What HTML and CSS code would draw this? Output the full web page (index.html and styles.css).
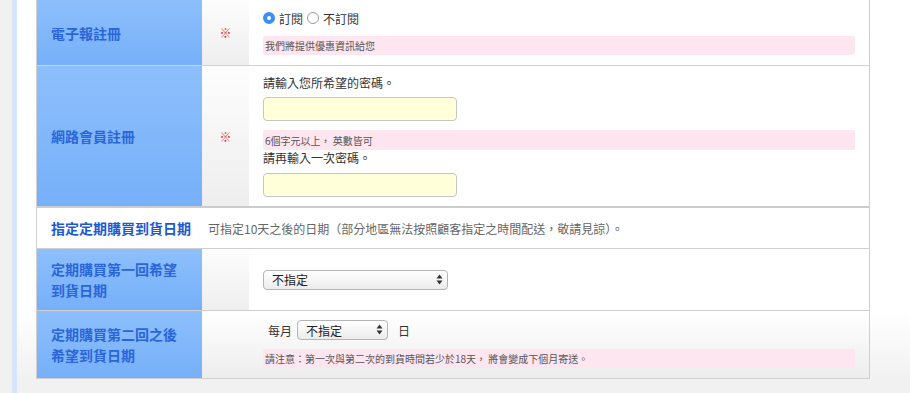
FILE: index.html
```html
<!DOCTYPE html>
<html lang="zh-Hant">
<head>
    <meta charset="UTF-8">
    <meta name="viewport" content="width=device-width, initial-scale=1.0">
    <title>會員註冊</title>
    <link rel="stylesheet" href="styles.css">
</head>
<body>
    <div class="page">
        <div class="form-table">
            <div class="form-row row-mail">
                <div class="label">電子報註冊</div>
                <div class="req">※</div>
                <div class="field">
                    <div class="radios">
                        <label class="radio"><input type="radio" name="mail" checked> 訂閱</label>
                        <label class="radio"><input type="radio" name="mail"> 不訂閱</label>
                    </div>
                    <div class="note note-mail">我們將提供優惠資訊給您</div>
                </div>
            </div>

            <div class="form-row row-member">
                <div class="label label-light">網路會員註冊</div>
                <div class="req">※</div>
                <div class="field">
                    <div class="text-line first">請輸入您所希望的密碼。</div>
                    <input type="password" class="pw">
                    <div class="note note-pw">6個字元以上，&nbsp;英數皆可</div>
                    <div class="text-line">請再輸入一次密碼。</div>
                    <input type="password" class="pw pw2">
                </div>
            </div>

            <div class="form-row row-info">
                <div class="label label-plain">指定定期購買到貨日期</div>
                <div class="info">可指定10天之後的日期（部分地區無法按照顧客指定之時間配送，敬請見諒）。</div>
            </div>

            <div class="form-row row-first">
                <div class="label two-line">定期購買第一回希望<br>到貨日期</div>
                <div class="req"></div>
                <div class="field center">
                    <span class="select-wrap wide">
                        <select><option>不指定</option></select>
                        <span class="arrows"><svg width="7" height="11" viewBox="0 0 7 11"><path d="M3.5 0.5L6.5 4.5H0.5Z" fill="#333"/><path d="M3.5 10.5L6.5 6.5H0.5Z" fill="#333"/></svg></span>
                    </span>
                </div>
            </div>

            <div class="form-row row-second">
                <div class="label two-line">定期購買第二回之後<br>希望到貨日期</div>
                <div class="req"></div>
                <div class="field">
                    <div class="month-line">
                        <span>每月</span>
                        <span class="select-wrap narrow">
                            <select><option>不指定</option></select>
                            <span class="arrows"><svg width="7" height="11" viewBox="0 0 7 11"><path d="M3.5 0.5L6.5 4.5H0.5Z" fill="#333"/><path d="M3.5 10.5L6.5 6.5H0.5Z" fill="#333"/></svg></span>
                        </span>
                        <span>日</span>
                    </div>
                    <div class="note note-second">請注意：第一次與第二次的到貨時間若少於18天，&nbsp;將會變成下個月寄送。</div>
                </div>
            </div>
        </div>
    </div>
</body>
</html>
```

FILE: styles.css
```css
body {
    margin: 0;
    background: #f1f1f1;
    font-family: "Noto Sans CJK TC", "Noto Sans", sans-serif;
    color: #333;
    height: 393px;
    overflow: hidden;
}
.page {
    margin-left: 12px;
    width: 872px;
    height: 400px;
    border-left: 5px solid #d7e6fa;
    border-right: 5px solid #d7e6fa;
    padding: 0 19px;
    box-sizing: content-box;
    background: linear-gradient(to bottom, #fff 0, #fff 78%, #f1f1f1 95%);
}
.form-table {
    width: 834px;
    margin-top: -1px;
    border: 1px solid #cfcfcf;
    box-sizing: border-box;
    background: #fff;
}
.form-row {
    display: grid;
    grid-template-columns: 165px 47px 1fr;
    border-top: 1px solid #cfcfcf;
    box-sizing: border-box;
}
.row-mail {
    height: 65px;
    border-top: none;
}
.row-member {
    height: 141px;
    border-top-color: #b9d5fa;
}
.row-info {
    grid-template-columns: 165px 1fr;
    height: 42px;
    border-top: 2px solid #cccccc;
}
.row-first {
    height: 62px;
}
.row-second {
    height: 68px;
    background: linear-gradient(to bottom, #fff, #ededed);
}
.label {
    background: linear-gradient(to bottom, #8dbffc, #76b0f9);
    color: #2b66d8;
    font-size: 14px;
    font-weight: bold;
    padding-left: 14px;
    display: flex;
    align-items: center;
}
.label-plain {
    background: none;
    color: #1d5ad2;
}
.two-line {
    line-height: 21px;
}
.req {
    background: linear-gradient(to bottom, #fdfdfd, #eeeeee);
    color: #e3262f;
    font-size: 12px;
    display: flex;
    align-items: center;
    justify-content: center;
}
.row-second .req {
    background: none;
}
.field {
    padding: 0 14px;
}
.field.center {
    display: flex;
    align-items: center;
}
.info {
    font-size: 12px;
    color: #666;
    padding-left: 6px;
    display: flex;
    align-items: center;
}
.radios {
    margin-top: 10px;
    height: 16px;
    display: flex;
    align-items: center;
    font-size: 12px;
    gap: 4px;
}
.radio {
    display: flex;
    align-items: center;
    gap: 4px;
}
.radio input {
    appearance: none;
    -webkit-appearance: none;
    width: 12px;
    height: 12px;
    margin: 0;
    border: 1px solid #9a9a9a;
    border-radius: 50%;
    background: #fff;
    box-sizing: border-box;
}
.radio input:checked {
    border: 4px solid #3b8ef5;
    background: #fff;
}
.note {
    background: #fde6ef;
    color: #555;
    font-size: 10px;
    border-radius: 2px;
    padding-left: 2px;
    display: flex;
    align-items: center;
}
.note-mail {
    margin-top: 10px;
    height: 19px;
}
.text-line {
    font-size: 12px;
    line-height: 16px;
    height: 16px;
}
.text-line.first {
    margin-top: 9px;
}
.pw {
    display: block;
    width: 194px;
    height: 24px;
    margin: 6px 0 0;
    box-sizing: border-box;
    border: 1px solid #c6c6c6;
    border-radius: 4px;
    background: #ffffd9;
}
.pw2 {
    margin-top: 7px;
}
.note-pw {
    margin-top: 9px;
    height: 20px;
}
.select-wrap {
    position: relative;
    display: inline-block;
    line-height: 0;
}
.select-wrap select {
    appearance: none;
    -webkit-appearance: none;
    height: 20px;
    border: 1px solid #b4b4b4;
    border-radius: 4px;
    background: linear-gradient(to bottom, #ffffff, #ececec);
    font-family: inherit;
    font-size: 12px;
    color: #222;
    padding: 0 0 0 8px;
    margin: 0;
    box-sizing: border-box;
}
.select-wrap.wide select {
    width: 185px;
}
.select-wrap.narrow select {
    width: 91px;
}
.arrows {
    position: absolute;
    right: 5px;
    top: 4px;
    line-height: 0;
}
.month-line {
    margin-top: 9px;
    height: 20px;
    padding-left: 5px;
    display: flex;
    align-items: center;
    gap: 5px;
    font-size: 12px;
}
.month-line span:last-child {
    margin-left: 5px;
}
.note-second {
    margin-top: 9px;
    height: 19px;
}
```
